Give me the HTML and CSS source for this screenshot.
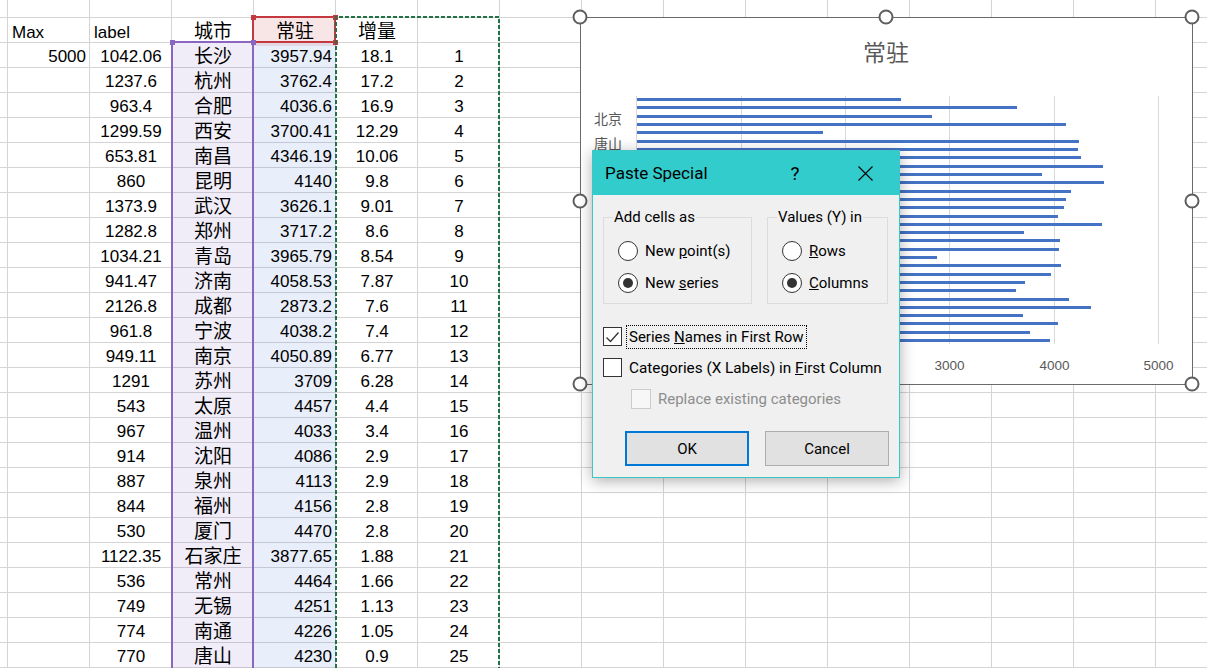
FILE: index.html
```html
<!DOCTYPE html>
<html lang="zh-CN">
<head>
<meta charset="utf-8">
<title>Paste Special</title>
<link rel="stylesheet" href="styles.css">
</head>
<body>
<div class="sheet">
  <div class="row row-top"></div>
  <div class="row head">
    <div class="cell"></div><div class="cell l">Max</div><div class="cell l">label</div><div class="cell c cjk">城市</div><div class="cell c cjk name">常驻</div><div class="cell c cjk">增量</div><div class="cell"></div>
  </div>
  <div class="row"><div class="cell"></div><div class="cell r">5000</div><div class="cell c">1042.06</div><div class="cell c cjk cat">长沙</div><div class="cell r val">3957.94</div><div class="cell c">18.1</div><div class="cell c">1</div></div>
  <div class="row"><div class="cell"></div><div class="cell r"></div><div class="cell c">1237.6</div><div class="cell c cjk cat">杭州</div><div class="cell r val">3762.4</div><div class="cell c">17.2</div><div class="cell c">2</div></div>
  <div class="row"><div class="cell"></div><div class="cell r"></div><div class="cell c">963.4</div><div class="cell c cjk cat">合肥</div><div class="cell r val">4036.6</div><div class="cell c">16.9</div><div class="cell c">3</div></div>
  <div class="row"><div class="cell"></div><div class="cell r"></div><div class="cell c">1299.59</div><div class="cell c cjk cat">西安</div><div class="cell r val">3700.41</div><div class="cell c">12.29</div><div class="cell c">4</div></div>
  <div class="row"><div class="cell"></div><div class="cell r"></div><div class="cell c">653.81</div><div class="cell c cjk cat">南昌</div><div class="cell r val">4346.19</div><div class="cell c">10.06</div><div class="cell c">5</div></div>
  <div class="row"><div class="cell"></div><div class="cell r"></div><div class="cell c">860</div><div class="cell c cjk cat">昆明</div><div class="cell r val">4140</div><div class="cell c">9.8</div><div class="cell c">6</div></div>
  <div class="row"><div class="cell"></div><div class="cell r"></div><div class="cell c">1373.9</div><div class="cell c cjk cat">武汉</div><div class="cell r val">3626.1</div><div class="cell c">9.01</div><div class="cell c">7</div></div>
  <div class="row"><div class="cell"></div><div class="cell r"></div><div class="cell c">1282.8</div><div class="cell c cjk cat">郑州</div><div class="cell r val">3717.2</div><div class="cell c">8.6</div><div class="cell c">8</div></div>
  <div class="row"><div class="cell"></div><div class="cell r"></div><div class="cell c">1034.21</div><div class="cell c cjk cat">青岛</div><div class="cell r val">3965.79</div><div class="cell c">8.54</div><div class="cell c">9</div></div>
  <div class="row"><div class="cell"></div><div class="cell r"></div><div class="cell c">941.47</div><div class="cell c cjk cat">济南</div><div class="cell r val">4058.53</div><div class="cell c">7.87</div><div class="cell c">10</div></div>
  <div class="row"><div class="cell"></div><div class="cell r"></div><div class="cell c">2126.8</div><div class="cell c cjk cat">成都</div><div class="cell r val">2873.2</div><div class="cell c">7.6</div><div class="cell c">11</div></div>
  <div class="row"><div class="cell"></div><div class="cell r"></div><div class="cell c">961.8</div><div class="cell c cjk cat">宁波</div><div class="cell r val">4038.2</div><div class="cell c">7.4</div><div class="cell c">12</div></div>
  <div class="row"><div class="cell"></div><div class="cell r"></div><div class="cell c">949.11</div><div class="cell c cjk cat">南京</div><div class="cell r val">4050.89</div><div class="cell c">6.77</div><div class="cell c">13</div></div>
  <div class="row"><div class="cell"></div><div class="cell r"></div><div class="cell c">1291</div><div class="cell c cjk cat">苏州</div><div class="cell r val">3709</div><div class="cell c">6.28</div><div class="cell c">14</div></div>
  <div class="row"><div class="cell"></div><div class="cell r"></div><div class="cell c">543</div><div class="cell c cjk cat">太原</div><div class="cell r val">4457</div><div class="cell c">4.4</div><div class="cell c">15</div></div>
  <div class="row"><div class="cell"></div><div class="cell r"></div><div class="cell c">967</div><div class="cell c cjk cat">温州</div><div class="cell r val">4033</div><div class="cell c">3.4</div><div class="cell c">16</div></div>
  <div class="row"><div class="cell"></div><div class="cell r"></div><div class="cell c">914</div><div class="cell c cjk cat">沈阳</div><div class="cell r val">4086</div><div class="cell c">2.9</div><div class="cell c">17</div></div>
  <div class="row"><div class="cell"></div><div class="cell r"></div><div class="cell c">887</div><div class="cell c cjk cat">泉州</div><div class="cell r val">4113</div><div class="cell c">2.9</div><div class="cell c">18</div></div>
  <div class="row"><div class="cell"></div><div class="cell r"></div><div class="cell c">844</div><div class="cell c cjk cat">福州</div><div class="cell r val">4156</div><div class="cell c">2.8</div><div class="cell c">19</div></div>
  <div class="row"><div class="cell"></div><div class="cell r"></div><div class="cell c">530</div><div class="cell c cjk cat">厦门</div><div class="cell r val">4470</div><div class="cell c">2.8</div><div class="cell c">20</div></div>
  <div class="row"><div class="cell"></div><div class="cell r"></div><div class="cell c">1122.35</div><div class="cell c cjk cat">石家庄</div><div class="cell r val">3877.65</div><div class="cell c">1.88</div><div class="cell c">21</div></div>
  <div class="row"><div class="cell"></div><div class="cell r"></div><div class="cell c">536</div><div class="cell c cjk cat">常州</div><div class="cell r val">4464</div><div class="cell c">1.66</div><div class="cell c">22</div></div>
  <div class="row"><div class="cell"></div><div class="cell r"></div><div class="cell c">749</div><div class="cell c cjk cat">无锡</div><div class="cell r val">4251</div><div class="cell c">1.13</div><div class="cell c">23</div></div>
  <div class="row"><div class="cell"></div><div class="cell r"></div><div class="cell c">774</div><div class="cell c cjk cat">南通</div><div class="cell r val">4226</div><div class="cell c">1.05</div><div class="cell c">24</div></div>
  <div class="row"><div class="cell"></div><div class="cell r"></div><div class="cell c">770</div><div class="cell c cjk cat">唐山</div><div class="cell r val">4230</div><div class="cell c">0.9</div><div class="cell c">25</div></div>
</div>

<div class="range range-name"></div>
<div class="range range-cat"></div>
<div class="hd red" style="left:251px;top:15px"></div>
<div class="hd red" style="left:333px;top:15px"></div>
<div class="hd red" style="left:333px;top:40px"></div>
<div class="hd purple" style="left:170px;top:40px"></div>
<div class="hd purple" style="left:251px;top:40px"></div>

<svg class="marquee" width="1207" height="668" viewBox="0 0 1207 668">
  <path d="M336 668 V17 H499 V668" fill="none" stroke="#217346" stroke-width="2" stroke-dasharray="4 2"/>
</svg>

<div class="chart">
  <svg class="chart-svg" width="611" height="366" viewBox="581 18 611 366" shape-rendering="crispEdges">
    <text x="886" y="61" class="ch-title" text-anchor="middle">常驻</text>
    <g fill="#d9d9d9">
      <rect x="636" y="96" width="1" height="248"/>
      <rect x="741" y="96" width="1" height="248"/>
      <rect x="845" y="96" width="1" height="248"/>
      <rect x="949" y="96" width="1" height="248"/>
      <rect x="1054" y="96" width="1" height="248"/>
      <rect x="1158" y="96" width="1" height="248"/>
    </g>
    <g fill="#4472c4">
      <rect x="637" y="98" width="263.6" height="3"/>
      <rect x="637" y="106" width="379.7" height="3"/>
      <rect x="637" y="115" width="294.6" height="3"/>
      <rect x="637" y="123" width="428.9" height="3"/>
      <rect x="637" y="131" width="186" height="3"/>
      <rect x="637" y="140" width="441.6" height="3"/>
      <rect x="637" y="148" width="441.2" height="3"/>
      <rect x="637" y="156" width="443.8" height="3"/>
      <rect x="637" y="165" width="466" height="3"/>
      <rect x="637" y="173" width="404.8" height="3"/>
      <rect x="637" y="181" width="466.7" height="3"/>
      <rect x="637" y="190" width="433.9" height="3"/>
      <rect x="637" y="198" width="429.4" height="3"/>
      <rect x="637" y="206" width="426.6" height="3"/>
      <rect x="637" y="215" width="421" height="3"/>
      <rect x="637" y="223" width="465.3" height="3"/>
      <rect x="637" y="231" width="387.2" height="3"/>
      <rect x="637" y="239" width="422.9" height="3"/>
      <rect x="637" y="248" width="421.6" height="3"/>
      <rect x="637" y="256" width="300" height="3"/>
      <rect x="637" y="264" width="423.7" height="3"/>
      <rect x="637" y="273" width="414" height="3"/>
      <rect x="637" y="281" width="388.1" height="3"/>
      <rect x="637" y="289" width="378.6" height="3"/>
      <rect x="637" y="298" width="432.2" height="3"/>
      <rect x="637" y="306" width="453.7" height="3"/>
      <rect x="637" y="314" width="386.3" height="3"/>
      <rect x="637" y="322" width="421.4" height="3"/>
      <rect x="637" y="331" width="392.8" height="3"/>
      <rect x="637" y="339" width="413.2" height="3"/>
    </g>
    <g class="ch-cat" text-anchor="end">
      <text x="622" y="124">北京</text>
      <text x="622" y="149">唐山</text>
    </g>
    <g class="ch-axis" text-anchor="middle">
      <text x="949.5" y="370">3000</text>
      <text x="1054.5" y="370">4000</text>
      <text x="1158.5" y="370">5000</text>
    </g>
  </svg>
</div>
<div class="handle" style="left:580px;top:17px"></div>
<div class="handle" style="left:886px;top:17px"></div>
<div class="handle" style="left:1192px;top:17px"></div>
<div class="handle" style="left:580px;top:201px"></div>
<div class="handle" style="left:1192px;top:201px"></div>
<div class="handle" style="left:580px;top:384px"></div>
<div class="handle" style="left:886px;top:384px"></div>
<div class="handle" style="left:1192px;top:384px"></div>

<div class="dialog">
  <div class="titlebar">
    <span class="title">Paste Special</span>
    <span class="help">?</span>
    <span class="close"><svg width="15" height="15" viewBox="0 0 15 15"><path d="M0.5 0.5 L14.5 14.5 M14.5 0.5 L0.5 14.5" stroke="#000" stroke-width="1.1" fill="none"/></svg></span>
  </div>
  <div class="body">
    <div class="groups">
      <fieldset class="group g1">
        <legend>Add cells as</legend>
        <div class="opt"><span class="rb"></span><span>New <u>p</u>oint(s)</span></div>
        <div class="opt"><span class="rb on"></span><span>New <u>s</u>eries</span></div>
      </fieldset>
      <fieldset class="group g2">
        <legend>Values (Y) in</legend>
        <div class="opt"><span class="rb"></span><span><u>R</u>ows</span></div>
        <div class="opt"><span class="rb on"></span><span><u>C</u>olumns</span></div>
      </fieldset>
    </div>
    <div class="checks">
      <div class="chk"><span class="cb checked"><svg width="17" height="17" viewBox="0 0 17 17"><path d="M2.5 9.5 L6.5 13.5 L14.5 4.5" stroke="#333" stroke-width="1.3" fill="none"/></svg></span><span class="lbl focus">Series <u>N</u>ames in First Row</span></div>
      <div class="chk"><span class="cb"></span><span class="lbl">Categories (X Labels) in <u>F</u>irst Column</span></div>
      <div class="chk indent disabled"><span class="cb"></span><span class="lbl">Replace existing categories</span></div>
    </div>
    <div class="buttons">
      <div class="btn default">OK</div>
      <div class="btn">Cancel</div>
    </div>
  </div>
</div>
</body>
</html>
```

FILE: styles.css
```css
* { box-sizing: border-box; }
html, body { margin: 0; padding: 0; }
body {
  width: 1207px;
  height: 668px;
  overflow: hidden;
  position: relative;
  background: #fff;
  font-family: "Liberation Sans", "Noto Sans CJK SC", sans-serif;
  color: #000;
}

/* ---------- spreadsheet ---------- */
.sheet {
  display: flex;
  flex-direction: column;
  height: 668px;
  background-image:
    linear-gradient(to right, #d4d4d4 1px, transparent 1px),
    linear-gradient(to bottom, #d4d4d4 1px, transparent 1px);
  background-size: 82px 25px;
  background-position: 7px 17px;
}
.row {
  display: grid;
  grid-template-columns: 8px repeat(6, 82px);
  height: 25px;
  flex: none;
}
.row-top { height: 18px; }
.cell {
  display: flex;
  align-items: flex-end;
  padding: 0 4px 2px 4px;
  font-size: 17px;
  line-height: 19px;
  white-space: nowrap;
  overflow: visible;
}
.l { justify-content: flex-start; }
.c { justify-content: center; }
.r { justify-content: flex-end; }
.cjk {
  font-family: "Noto Sans CJK SC", sans-serif;
  font-size: 19px;
  line-height: 24px;
  padding-bottom: 1px;
}
.head .cell { padding-bottom: 4px; }
.head .cjk { padding-bottom: 4px; }
.cat { background: rgba(120, 90, 190, 0.11); }
.val { background: rgba(70, 120, 210, 0.12); }
.name { background: rgba(200, 50, 50, 0.12); }

/* chart data range highlights (overlays) */
.range { position: absolute; pointer-events: none; }
.range-cat {
  left: 171px; top: 41px; width: 83px; height: 640px;
  border: 2px solid #8a66c0;
}
.range-name {
  left: 252px; top: 16px; width: 84px; height: 27px;
  border: 2px solid #c4393f;
}
.hd { position: absolute; width: 5px; height: 5px; }
.hd.red { background: #c4393f; }
.hd.purple { background: #8a66c0; }

.marquee { position: absolute; left: 0; top: 0; pointer-events: none; }

/* ---------- chart ---------- */
.chart {
  position: absolute;
  left: 580px; top: 17px;
  width: 613px; height: 368px;
  border: 1px solid #6a6a6a;
  background: #fff;
}
.chart-svg { display: block; }
.ch-title {
  font-family: "Noto Sans CJK SC", sans-serif;
  font-size: 23px;
  fill: #595959;
}
.ch-cat {
  font-family: "Noto Sans CJK SC", sans-serif;
  font-size: 14px;
  fill: #595959;
}
.ch-axis {
  font-family: "Liberation Sans", sans-serif;
  font-size: 13.5px;
  fill: #595959;
}
.handle {
  position: absolute;
  width: 15px; height: 15px;
  border-radius: 50%;
  border: 2.5px solid #5e5e5e;
  background: #fff;
  transform: translate(-50%, -50%);
}

/* ---------- dialog ---------- */
.dialog {
  position: absolute;
  left: 592px; top: 150px;
  width: 308px; height: 328px;
  background: #f0f0f0;
  border: 1px solid #3ec6c6;
  box-shadow: 0 3px 14px rgba(0, 0, 0, 0.32);
  font-family: Roboto, "Liberation Sans", sans-serif;
  font-size: 15px;
  color: #000;
  display: flex;
  flex-direction: column;
}
.titlebar {
  height: 44px;
  flex: none;
  background: #33cccc;
  display: flex;
  align-items: center;
  padding: 0 11px 0 12px;
}
.title { flex: 1; font-size: 17px; }
.help {
  width: 46px;
  margin-right: 24px;
  text-align: center;
  font-size: 19px;
}
.close {
  width: 46px;
  display: flex;
  justify-content: center;
  align-items: center;
}
.close svg { display: block; }
.body {
  flex: 1;
  padding: 12px 10px 0 10px;
  display: flex;
  flex-direction: column;
}
.groups { display: flex; gap: 15px; }
.group {
  margin: 0;
  min-width: 0;
  border: 1px solid #dcdcdc;
  padding: 8px 0 4px 9px;
}
.g1 { width: 149px; }
.g2 { width: 121px; }
.group legend {
  padding: 0 1px;
  line-height: 20px;
  font-size: 15px;
}
.opt {
  height: 32px;
  display: flex;
  align-items: center;
  gap: 7px;
  padding-left: 5px;
  white-space: nowrap;
}
.rb {
  width: 20px; height: 20px;
  flex: none;
  border-radius: 50%;
  border: 1px solid #333;
  background: #fff;
  display: flex;
  align-items: center;
  justify-content: center;
}
.rb.on::after {
  content: "";
  width: 10px; height: 10px;
  border-radius: 50%;
  background: #333;
}
.checks { margin-top: 17px; display: flex; flex-direction: column; }
.chk {
  height: 31px;
  display: flex;
  align-items: center;
  white-space: nowrap;
}
.chk.indent { padding-left: 28px; }
.cb {
  width: 19px; height: 19px;
  flex: none;
  border: 1px solid #333;
  background: #fff;
  display: flex;
  align-items: center;
  justify-content: center;
}
.cb svg { display: block; }
.lbl { margin-left: 7px; }
.lbl.focus {
  margin-left: 4px;
  padding: 0 2px;
  line-height: 22px;
  border: 1px dotted #000;
}
.chk:nth-child(2) .lbl { font-size: 15.3px; }
.disabled .cb { border-color: #cccccc; background: #f7f7f7; width: 20px; height: 20px; }
.disabled .lbl { color: #8d8d8d; }
.buttons {
  margin-top: 17px;
  display: flex;
  justify-content: flex-end;
  gap: 16px;
}
.btn {
  width: 124px; height: 35px;
  background: #e1e1e1;
  border: 1px solid #adadad;
  display: flex;
  align-items: center;
  justify-content: center;
  font-size: 15px;
}
.btn.default { border: 2px solid #0078d7; }
```
